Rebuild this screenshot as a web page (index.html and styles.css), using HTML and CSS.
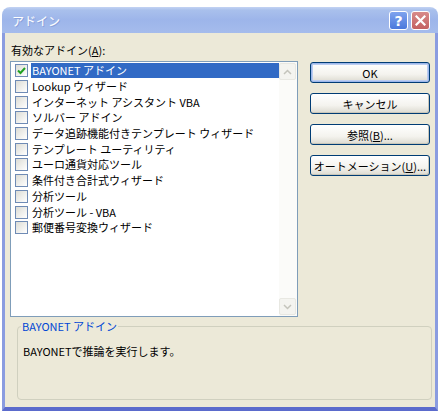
FILE: index.html
```html
<!DOCTYPE html>
<html lang="ja">
<head>
    <meta charset="UTF-8">
    <title>アドイン</title>
    <link rel="stylesheet" href="styles.css">
</head>
<body>
    <div class="window">
        <div class="titlebar">
            <span class="title">アドイン</span>
            <div class="caption-buttons">
                <span class="cap help">?</span>
                <span class="cap close">
                    <svg width="11" height="11" viewBox="0 0 11 11"><path d="M1.5 1.5 L9.5 9.5 M9.5 1.5 L1.5 9.5" stroke="#fff" stroke-width="2.2" stroke-linecap="square"/></svg>
                </span>
            </div>
        </div>
        <div class="client">
            <div class="main">
                <div class="left">
                    <div class="label">有効なアドイン(<u>A</u>):</div>
                    <div class="listbox">
                        <ul class="items">
                            <li class="item selected"><span class="check checked"><svg width="11" height="11" viewBox="0 0 11 11"><path d="M2 5.5 L4.5 8 L9 3" fill="none" stroke="#21a121" stroke-width="2"/></svg></span><span class="text">BAYONET アドイン</span></li>
                            <li class="item"><span class="check"></span><span class="text">Lookup ウィザード</span></li>
                            <li class="item"><span class="check"></span><span class="text">インターネット アシスタント VBA</span></li>
                            <li class="item"><span class="check"></span><span class="text">ソルバー アドイン</span></li>
                            <li class="item"><span class="check"></span><span class="text">データ追跡機能付きテンプレート ウィザード</span></li>
                            <li class="item"><span class="check"></span><span class="text">テンプレート ユーティリティ</span></li>
                            <li class="item"><span class="check"></span><span class="text">ユーロ通貨対応ツール</span></li>
                            <li class="item"><span class="check"></span><span class="text">条件付き合計式ウィザード</span></li>
                            <li class="item"><span class="check"></span><span class="text">分析ツール</span></li>
                            <li class="item"><span class="check"></span><span class="text">分析ツール - VBA</span></li>
                            <li class="item"><span class="check"></span><span class="text">郵便番号変換ウィザード</span></li>
                        </ul>
                        <div class="scrollbar">
                            <span class="sb-btn"><svg width="9" height="6" viewBox="0 0 9 6"><path d="M1 5 L4.5 1.5 L8 5" fill="none" stroke="#c4c4bc" stroke-width="1.5"/></svg></span>
                            <span class="sb-btn"><svg width="9" height="6" viewBox="0 0 9 6"><path d="M1 1 L4.5 4.5 L8 1" fill="none" stroke="#c4c4bc" stroke-width="1.5"/></svg></span>
                        </div>
                    </div>
                </div>
                <div class="buttons">
                    <button class="btn default">OK</button>
                    <button class="btn">キャンセル</button>
                    <button class="btn">参照(<u>B</u>)...</button>
                    <button class="btn">オートメーション(<u>U</u>)...</button>
                </div>
            </div>
            <fieldset class="group">
                <legend>BAYONET アドイン</legend>
                <p class="desc">BAYONETで推論を実行します。</p>
            </fieldset>
        </div>
    </div>
</body>
</html>
```

FILE: styles.css
```css
body {
    margin: 0;
    background: #fff;
    font-family: "Noto Sans CJK JP", "DejaVu Sans", sans-serif;
    font-size: 11px;
    color: #000;
}
.window {
    width: 436px;
    margin: 7px 0 0 2px;
}
.titlebar {
    height: 26px;
    border-radius: 8px 8px 0 0;
    background: linear-gradient(to bottom, #c3d3f3 0%, #a9c0ec 12%, #9db5ea 50%, #a5bcec 100%);
    display: flex;
    align-items: center;
    justify-content: space-between;
    padding: 0 8px 0 10px;
}
.title {
    color: #fff;
    font-size: 12px;
    text-shadow: 1px 1px 0 #8aa2da;
}
.caption-buttons {
    display: flex;
    gap: 3px;
    margin-top: 1px;
}
.cap {
    width: 19px;
    height: 19px;
    box-sizing: border-box;
    border: 1px solid #fff;
    border-radius: 3px;
    display: flex;
    align-items: center;
    justify-content: center;
    color: #fff;
    font-family: "DejaVu Sans", sans-serif;
    font-weight: bold;
    font-size: 14px;
}
.help {
    background: linear-gradient(to bottom, #7ea3ee, #4a78dc);
}
.close {
    background: linear-gradient(to bottom, #d78a8a, #c46161);
}
.client {
    background: #ece9d8;
    border-left: 3px solid #8a9ce0;
    border-right: 3px solid #8a9ce0;
    border-bottom: 4px solid #5b6bcc;
    padding: 10px 2px 7px 5px;
}
.main {
    display: flex;
    gap: 12px;
}
.label {
    line-height: 14px;
    margin: 0 0 4px 1px;
}
.listbox {
    width: 288px;
    height: 256px;
    box-sizing: border-box;
    border: 1px solid #7f9db9;
    background: #fff;
    display: flex;
}
.items {
    list-style: none;
    margin: 0;
    padding: 1px 0 0 0;
    flex: 1;
}
.item {
    height: 15.7px;
    display: flex;
    align-items: center;
}
.check {
    width: 13px;
    height: 13px;
    box-sizing: border-box;
    border: 1px solid #6f8bb5;
    background: linear-gradient(135deg, #dcdcd5, #fff);
    margin: 0 3px 0 4px;
    display: flex;
    align-items: center;
    justify-content: center;
}
.text {
    line-height: 15px;
    padding: 0 2px 0 1px;
    flex: 1;
    white-space: nowrap;
}
.selected .text {
    background: #316ac5;
    color: #fff;
}
.scrollbar {
    width: 17px;
    padding: 1px 1px 1px 0;
    display: flex;
    flex-direction: column;
    justify-content: space-between;
    background: #fbfbf9;
}
.sb-btn {
    height: 17px;
    box-sizing: border-box;
    border: 1px solid #e8e8e2;
    border-radius: 2px;
    background: #f4f4f0;
    display: flex;
    align-items: center;
    justify-content: center;
}
.buttons {
    display: flex;
    flex-direction: column;
    gap: 10px;
    padding-top: 19px;
}
.btn {
    width: 120px;
    height: 21px;
    font-family: inherit;
    font-size: 11px;
    color: #000;
    padding: 0;
    border: 1px solid #003c74;
    border-radius: 3px;
    background: linear-gradient(to bottom, #fff 0%, #f4f3ee 60%, #dcdad0 100%);
    box-shadow: inset -1px -1px 0 #c9c7ba;
}
.btn.default {
    box-shadow: inset 0 0 0 1px #9db8eb, inset 0 0 0 2px #bccdf0;
}
.group {
    margin: 2px 1px 0 7px;
    padding: 0 5px 41px 5px;
    border: 1px solid #d0d0bf;
    border-radius: 4px;
}
.group legend {
    color: #0046d5;
    line-height: 14px;
    padding: 0 1px;
    margin-left: -2px;
}
.desc {
    margin: 11px 0 0 0;
    line-height: 14px;
}
```
